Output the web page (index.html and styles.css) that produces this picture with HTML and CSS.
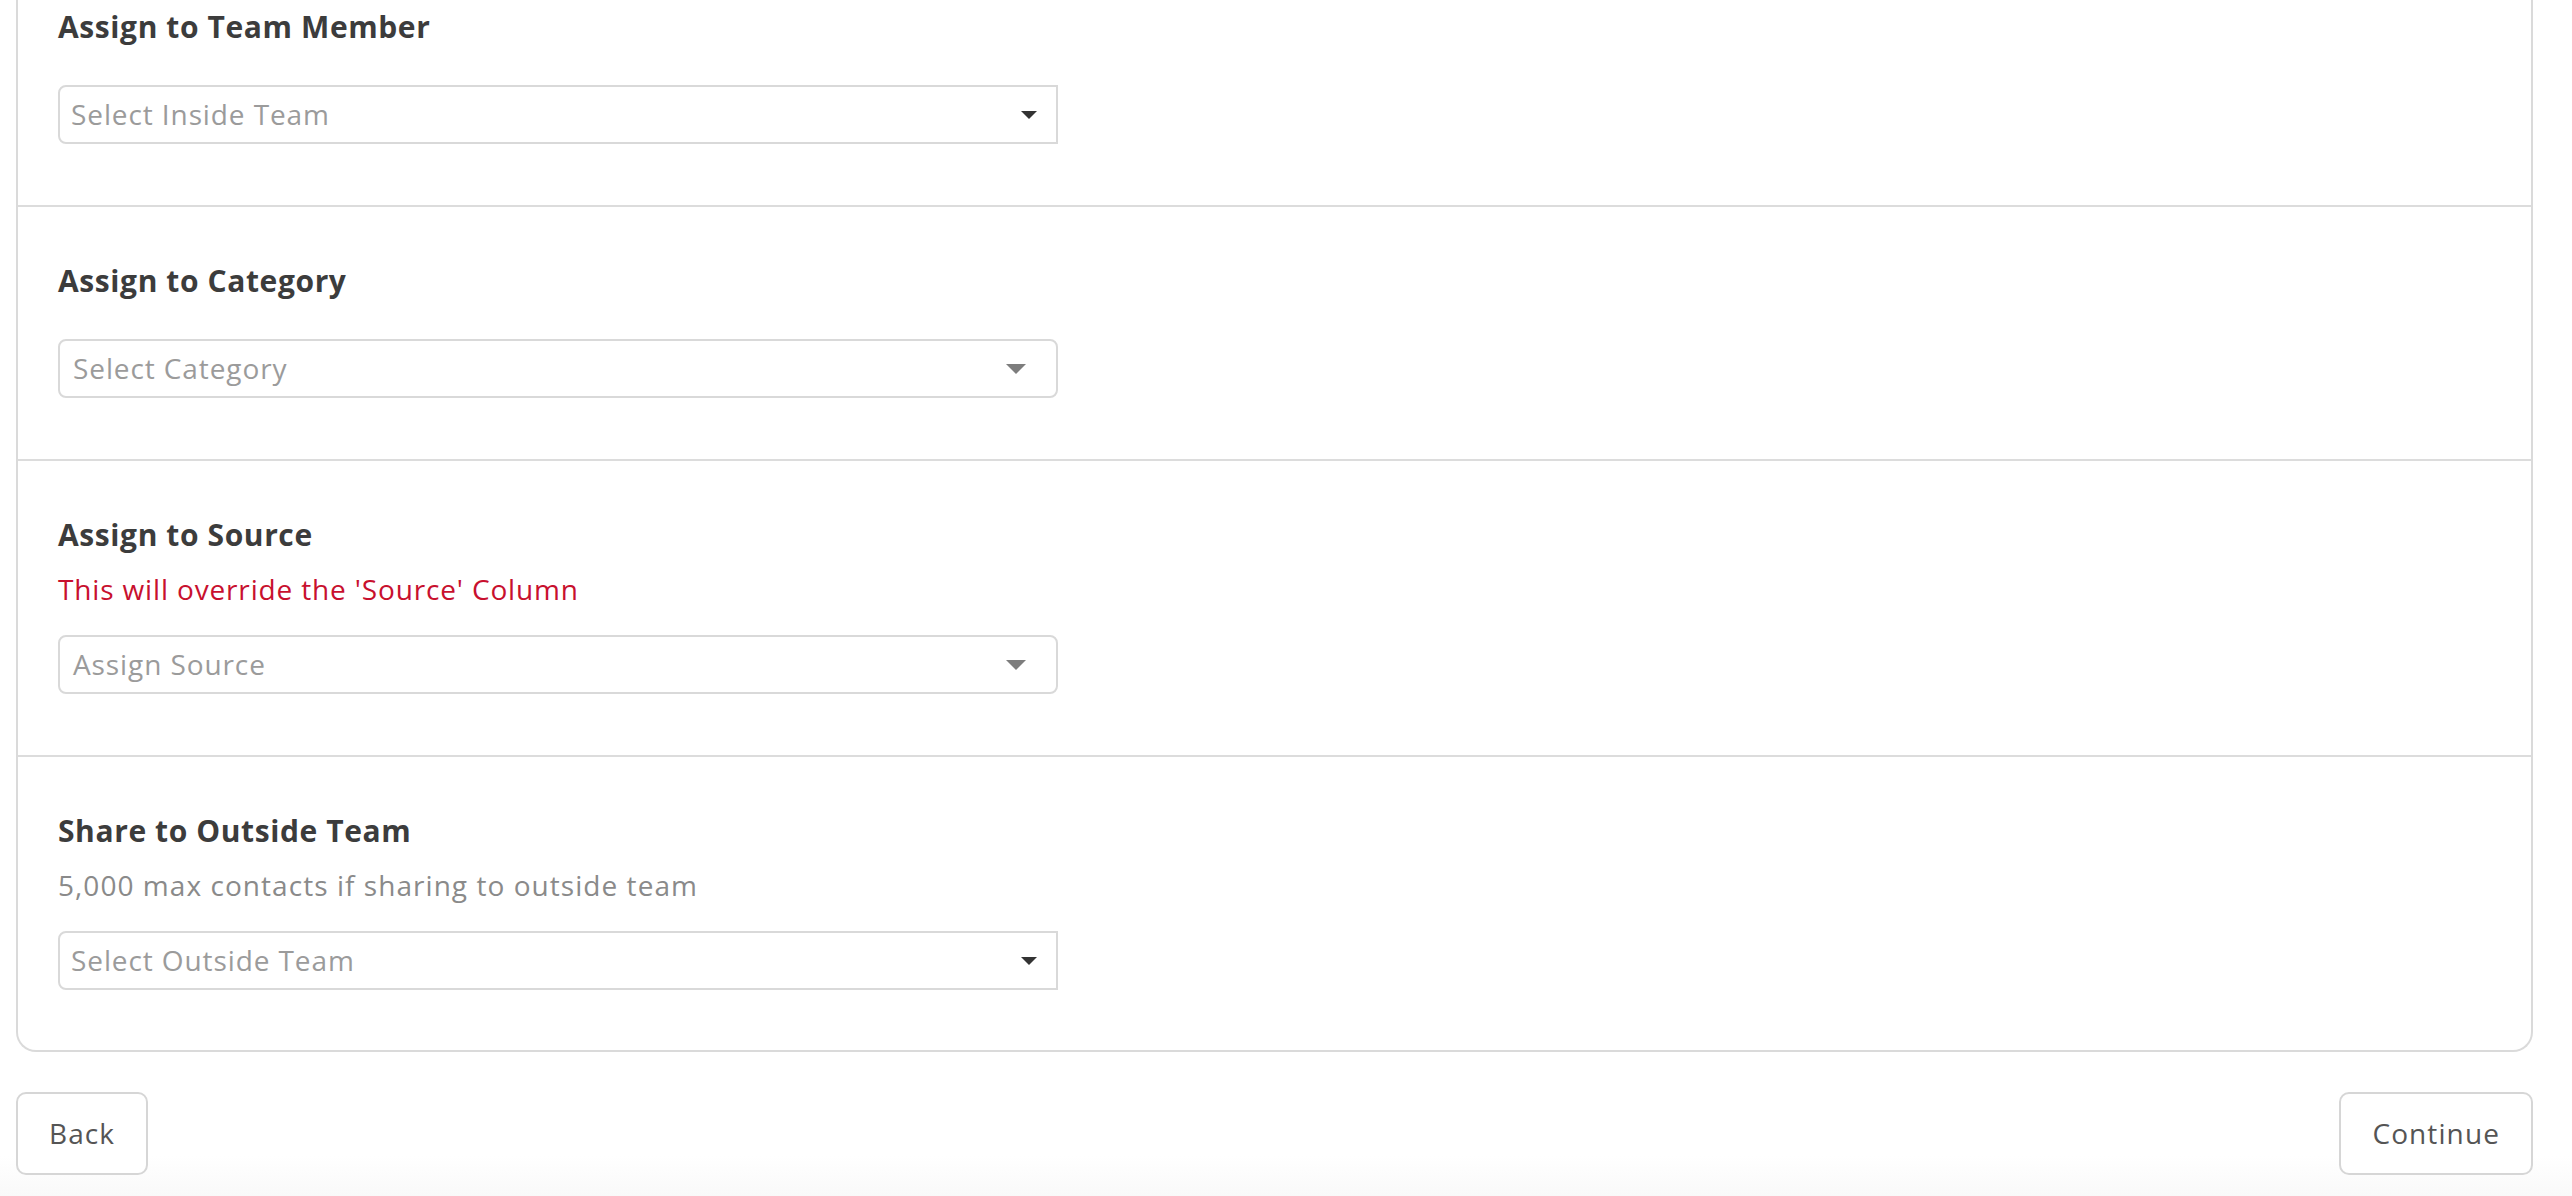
FILE: index.html
```html
<!DOCTYPE html>
<html lang="en">
<head>
<meta charset="utf-8">
<title>Assign contacts</title>
<link rel="stylesheet" href="styles.css">
</head>
<body>
<div class="page">
  <div class="card">
    <section class="sec sec-first">
      <h2 class="sec-title">Assign to Team Member</h2>
      <div class="select select-native">
        <span class="ph">Select Inside Team</span>
        <span class="caret caret-dark"></span>
      </div>
    </section>
    <section class="sec">
      <h2 class="sec-title">Assign to Category</h2>
      <div class="select select-custom">
        <span class="ph">Select Category</span>
        <span class="caret caret-gray"></span>
      </div>
    </section>
    <section class="sec">
      <h2 class="sec-title">Assign to Source</h2>
      <p class="note note-warn">This will override the 'Source' Column</p>
      <div class="select select-custom">
        <span class="ph">Assign Source</span>
        <span class="caret caret-gray"></span>
      </div>
    </section>
    <section class="sec sec-last">
      <h2 class="sec-title">Share to Outside Team</h2>
      <p class="note note-muted">5,000 max contacts if sharing to outside team</p>
      <div class="select select-native">
        <span class="ph">Select Outside Team</span>
        <span class="caret caret-dark"></span>
      </div>
    </section>
  </div>
  <div class="actions">
    <button class="btn" type="button">Back</button>
    <button class="btn" type="button">Continue</button>
  </div>
</div>
</body>
</html>
```
FILE: styles.css
```css
html, body {
  margin: 0;
  height: 100%;
}
body {
  font-family: "Open Sans", "Liberation Sans", sans-serif;
  background: linear-gradient(180deg, #ffffff 0, #ffffff calc(100% - 40px), #f9f9f9 100%);
  color: #3a3a3a;
}
.page {
  padding: 0 39px 0 16px;
}
.card {
  border: 2px solid #dadada;
  border-top: 0;
  border-radius: 0 0 20px 20px;
  background: #fff;
}
.sec {
  display: flex;
  flex-direction: column;
  align-items: flex-start;
  padding: 56px 40px 61px;
  border-top: 2px solid #dcdcdc;
}
.sec-first {
  border-top: 0;
  padding-top: 9px;
}
.sec-last {
  padding-bottom: 60px;
}
.sec-title {
  margin: 0 0 18px;
  font-size: 30px;
  line-height: 36px;
  font-weight: 700;
  letter-spacing: 0.6px;
  color: #3c3c3c;
}
.note {
  margin: 0 0 6px;
  font-size: 28px;
  line-height: 36px;
  letter-spacing: 0.85px;
}
.note-warn {
  color: #c8102e;
}
.note-muted {
  color: #8a8a8a;
  letter-spacing: 1.05px;
}
.select {
  margin-top: 22px;
  width: 1000px;
  height: 59px;
  box-sizing: border-box;
  border: 2px solid #d9d9d9;
  display: flex;
  align-items: center;
  justify-content: space-between;
  background: #fff;
}
.select-native {
  border-radius: 8px 0 0 8px;
  padding: 0 19px 0 11px;
}
.select-custom {
  border-radius: 8px;
  padding: 0 30px 0 13px;
}
.ph {
  font-size: 28px;
  line-height: 55px;
  letter-spacing: 0.9px;
  color: #9b9b9b;
  white-space: nowrap;
}
.caret {
  width: 0;
  height: 0;
  border-style: solid;
  border-color: transparent;
}
.caret-dark {
  border-width: 8px 8px 0 8px;
  border-top-color: #333333;
}
.caret-gray {
  border-width: 10px 10px 0 10px;
  border-top-color: #7d7d7d;
}
.actions {
  margin-top: 40px;
  display: flex;
  justify-content: space-between;
}
.btn {
  height: 83px;
  box-sizing: border-box;
  padding: 0 31px;
  border: 2px solid #d6d6d6;
  border-radius: 10px;
  background: #fff;
  font-family: "Open Sans", "Liberation Sans", sans-serif;
  font-size: 28px;
  line-height: 79px;
  letter-spacing: 1.1px;
  color: #555555;
  cursor: pointer;
}
```
